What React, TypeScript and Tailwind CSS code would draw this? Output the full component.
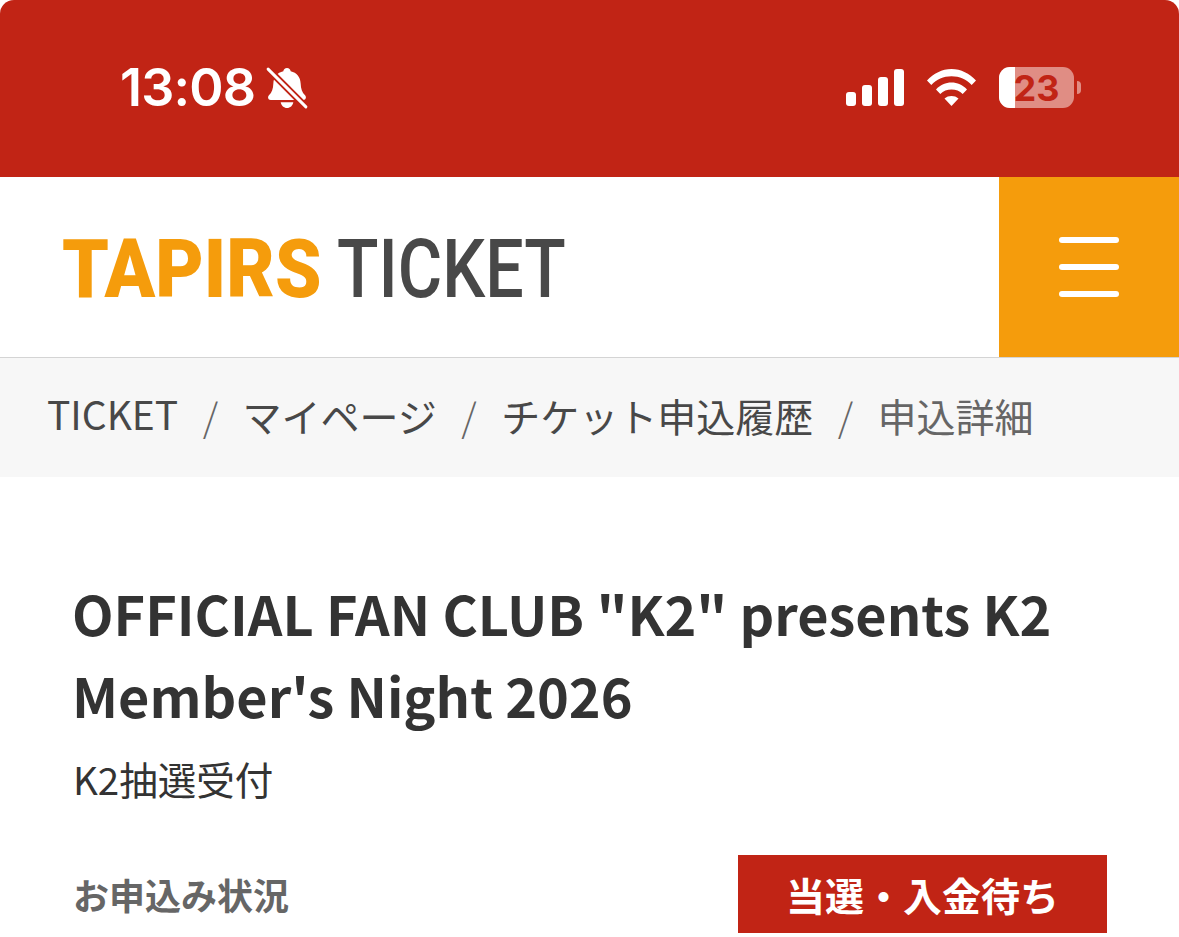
function BellOff() {
  return (
    <svg viewBox="0 0 40 40" className="w-[42px] h-[42px]" fill="white">
      <path d="M20 1c2 0 3.300 1.300 3.500 3.100 5.800 1.300 9.300 5.800 9.500 11.500.2 5 1.400 8.500 4 11 1.700 1.800 1.300 4.400-1.500 4.900H4.500c-2.800-.5-3.200-3.100-1.500-4.900 2.600-2.500 3.800-6 4-11 .2-5.700 3.700-10.200 9.500-11.500C16.700 2.300 18 1 20 1z" />
      <path d="M14 33.500h12c-.5 3.300-3 5.500-6 5.500s-5.500-2.200-6-5.500z" />
      <path d="M2 2 L39 39" stroke="#c12415" strokeWidth="6.500" />
      <path d="M2 2 L38 38" stroke="white" strokeWidth="2.800" strokeLinecap="round" />
    </svg>
  );
}

function Signal() {
  return (
    <div className="flex items-end gap-[6px] h-[37px]">
      <span className="w-[10px] h-[14px] rounded-[3px] bg-white" />
      <span className="w-[10px] h-[21px] rounded-[3px] bg-white" />
      <span className="w-[10px] h-[29px] rounded-[3px] bg-white" />
      <span className="w-[10px] h-[37px] rounded-[3px] bg-white" />
    </div>
  );
}

function Wifi() {
  return (
    <svg viewBox="0 0 50 37" className="w-[51px] h-[37px]" fill="white">
      <path d="M0.500 11.500C7 4.500 15.500 0 25 0s18 4.500 24.500 11.500l-4.300 4.500C40 10.500 33 7.200 25 7.200S10 10.500 4.800 16z" />
      <path d="M9.500 20.500C13.800 16.200 19.200 13.600 25 13.600S36.200 16.200 40.500 20.500l-4.300 4.500C33.200 22 29.300 20.600 25 20.600s-8.200 1.400-11.200 4.400z" />
      <path d="M18 29.500C20 27.800 22.300 27 25 27s5 .8 7 2.500L25 37z" />
    </svg>
  );
}

function Battery() {
  return (
    <div className="flex items-center gap-[3px]">
      <div className="relative w-[75px] h-[41px] rounded-[11px] overflow-hidden bg-[#e08d84] flex items-center justify-center">
        <span className="absolute left-0 top-0 bottom-0 w-[16px] bg-white" />
        <span className="relative text-[#c12415] text-[36px] font-bold leading-none font-['Inter',sans-serif]">23</span>
      </div>
      <span className="w-[4px] h-[13px] rounded-r-full bg-[#e08d84]" />
    </div>
  );
}

export default function App() {
  return (
    <div className="w-[1179px] h-[937px] overflow-hidden bg-white font-['Noto_Sans_CJK_JP',sans-serif]">
      {/* Status bar */}
      <div className="h-[177px] bg-[#c12415] rounded-t-[14px] flex items-start justify-between pl-[120px] pr-[98px] pt-[67px]">
        <div className="flex items-center gap-[11px] h-[42px]">
          <span className="text-white text-[52px] font-semibold leading-none font-['Inter',sans-serif] tracking-[-0.8px]">13:08</span>
          <BellOff />
        </div>
        <div className="flex items-center gap-[22px] h-[41px]">
          <Signal />
          <Wifi />
          <Battery />
        </div>
      </div>

      {/* Header */}
      <header className="h-[181px] flex items-stretch justify-between border-b border-[#d4d4d4]">
        <div className="flex items-center pl-[62px] gap-[17px] text-[82px] leading-none font-['Roboto',sans-serif] pt-[3px]">
          <span className="w-[258px] inline-block whitespace-nowrap font-black text-[#f59c0c] origin-left scale-x-[0.908]">TAPIRS</span>
          <span className="w-[228px] inline-block whitespace-nowrap font-medium text-[#484848] origin-left scale-x-[0.83]">TICKET</span>
        </div>
        <button className="w-[180px] bg-[#f59c0c] flex flex-col items-center justify-center gap-[21px]">
          <span className="w-[60px] h-[6px] rounded-full bg-white" />
          <span className="w-[60px] h-[6px] rounded-full bg-white" />
          <span className="w-[60px] h-[6px] rounded-full bg-white" />
        </button>
      </header>

      {/* Breadcrumb */}
      <nav className="h-[119px] bg-[#f7f7f7] flex items-center pl-[47px] pb-[4px] text-[39px] leading-none text-[#484848]">
        <span className="mb-[5px]">TICKET</span>
        <span className="mx-[24.5px] text-[#666666] font-light">/</span>
        <span>マイページ</span>
        <span className="mx-[24.5px] text-[#666666] font-light">/</span>
        <span>チケット申込履歴</span>
        <span className="mx-[24.5px] text-[#666666] font-light">/</span>
        <span className="text-[#666666]">申込詳細</span>
      </nav>

      {/* Content */}
      <main className="pl-[72px] pr-[72px] pt-[97px]">
        <h1 className="text-[54px] leading-[82px] font-bold text-[#333333] -mt-[2px]">
          OFFICIAL FAN CLUB "K2" presents K2 Member's Night 2026
        </h1>
        <p className="text-[38.500px] leading-[50px] text-[#333333] mt-[17px] pl-[1px]">K2抽選受付</p>
        <div className="flex items-center justify-between mt-[52px] pl-[1px]">
          <span className="text-[36px] font-bold text-[#666666]">お申込み状況</span>
          <span className="w-[369px] h-[78px] bg-[#c12415] text-white text-[39px] font-bold flex items-center justify-center">
            当選・入金待ち
          </span>
        </div>
      </main>
    </div>
  );
}
